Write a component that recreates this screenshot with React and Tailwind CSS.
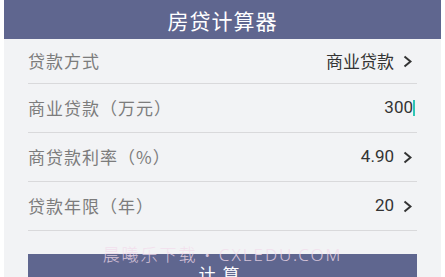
import React from 'react';

const Chevron = () => (
  <svg width="9" height="13" viewBox="0 0 9 13" className="ml-[9px]">
    <path d="M1.5 1.5 L7.5 6.5 L1.5 11.5" fill="none" stroke="#333" strokeWidth="2" />
  </svg>
);

const rows = [
  { label: '商业贷款（万元）', value: '300', input: true },
  { label: '商贷款利率（%）', value: '4.90' },
  { label: '贷款年限（年）', value: '20' },
];

const App = () => {
  return (
    <div
      className="w-[445px] h-[277px] overflow-hidden bg-white px-[4px] relative"
      style={{ fontFamily: '"Noto Sans CJK SC", "Noto Sans", sans-serif' }}
    >
      <div className="h-full bg-[#f2f3f5]">
        <div className="h-[39px] bg-[#5f668f] flex items-center justify-center text-white text-[21px] tracking-[1px] pt-[2px]">
          房贷计算器
        </div>
        <div className="mx-[24px]">
          <div className="h-[45px] border-b border-[#d9d9db] flex items-center justify-between text-[17px]">
            <span className="text-[#7c7c7c] tracking-[1px]">贷款方式</span>
            <span className="flex items-center text-[#333] mr-[5px]">
              商业贷款
              <Chevron />
            </span>
          </div>
          {rows.map((row) => (
            <div
              key={row.label}
              className="h-[49px] border-b border-[#d9d9db] flex items-center justify-between text-[17px]"
            >
              <span className="text-[#7c7c7c] tracking-[1px]">{row.label}</span>
              {row.input ? (
                <span className="flex items-center text-[#333] mr-[2px]" style={{ fontFamily: 'Roboto, sans-serif' }}>
                  {row.value}
                  <span className="w-[2px] h-[16px] bg-[#2fc5b5]" />
                </span>
              ) : (
                <span className="flex items-center text-[#333] mr-[5px]" style={{ fontFamily: 'Roboto, sans-serif' }}>
                  {row.value}
                  <Chevron />
                </span>
              )}
            </div>
          ))}
          <button className="w-full mt-[23px] h-[44px] bg-[#5f668f] text-white text-[17px] tracking-[7px] flex items-start justify-center pt-[7px]">
            计算
          </button>
        </div>
      </div>
      <div
        className="absolute left-0 right-0 top-[245px] text-center text-[17px] leading-[20px] text-[#f3dcec] opacity-80 tracking-[2px] font-light"
        style={{ fontFamily: '"Noto Sans", "Noto Sans CJK SC", sans-serif' }}
      >
        晨曦乐下载 • CXLEDU.COM
      </div>
    </div>
  );
};

export default App;
